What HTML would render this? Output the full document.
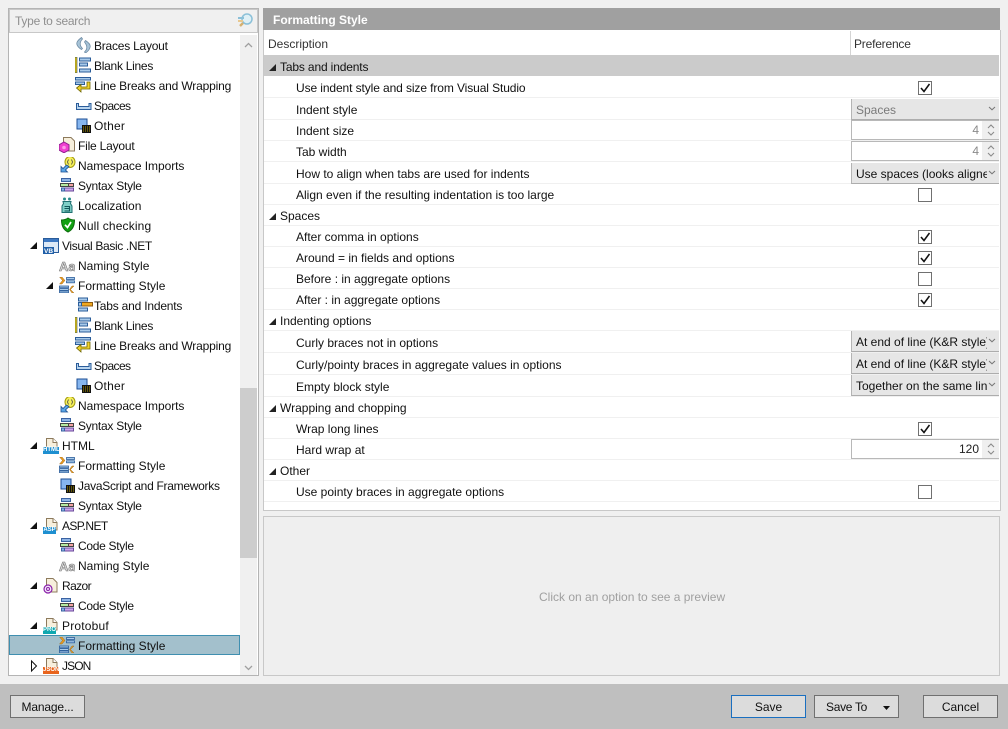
<!DOCTYPE html>
<html><head><meta charset="utf-8"><style>
html,body{margin:0;padding:0}
body{width:1008px;height:729px;position:relative;overflow:hidden;background:#f0f0f0;font:12px "Liberation Sans",sans-serif;color:#111}
div,svg{position:absolute}
.t{height:20px;line-height:20px;white-space:nowrap}
.i{width:16px;height:16px;overflow:visible}
.l{left:264px;width:735px;height:1px;background:#f0f0f0}
.cb{left:918px;width:12px;height:12px;border:1px solid #707070;background:#fff}
.cb svg{left:1px;top:1px}
.sel{left:851px;width:147px;background:#e6e6e6;border-left:1px solid #b4b4b4;border-bottom:1px solid #adadad;line-height:22px;white-space:nowrap;overflow:hidden;text-indent:4px}
.sel b{position:absolute;right:0;top:0;width:12px;height:20px;background:#e6e6e6}
.sel svg{right:3px;top:7px}
.sp{left:851px;width:147px;height:18px;background:#fff;border:1px solid #b8b8b8;border-width:1px 0 1px 1px;text-align:right;line-height:19px}
.sp span{position:absolute;right:20px;top:0}
.sp b{position:absolute;right:0;top:0;width:17px;height:18px;background:#efefef}
.sp svg{right:3px;top:2px}
.btn{height:21px;line-height:23px;text-align:center;background:#dcdcdc;border:1px solid #707070}
</style></head><body>
<svg width="0" height="0" style="left:0;top:0"><defs>
<symbol id="brace" viewBox="0 0 16 16"><path d="M5.500 .5C2 3 .5 5 .8 7C1.200 9 3 11 5.500 12.500L6.500 11.500C5 10 4.200 8.500 4.200 6.800C4.200 5 5 3.500 6.500 2Z" fill="#a8c4d8" stroke="#6f8ca4" stroke-width=".8"/><path d="M9.500 3.500C12.500 5.500 14.500 7.500 14.200 9.500C14 11.500 12.500 14 9.500 16L8.500 15C10 13.500 10.800 12 10.800 10.200C10.800 8.500 10 7 8.500 5Z" fill="#a8c4d8" stroke="#6f8ca4" stroke-width=".8"/></symbol>
<symbol id="blank" viewBox="0 0 16 16"><rect x="0" y="0" width="2" height="16" fill="#f4d000" stroke="#1d3f6e" stroke-width=".6"/><rect x="4.500" y="1" width="11" height="3" fill="#a9cbea" stroke="#2a5c9a"/><rect x="4.500" y="6" width="8" height="3" fill="#a9cbea" stroke="#2a5c9a"/><rect x="4.500" y="12" width="11" height="3" fill="#a9cbea" stroke="#2a5c9a"/></symbol>
<symbol id="wrap" viewBox="0 0 16 16"><rect x=".5" y=".5" width="15" height="2.500" fill="#a9cbea" stroke="#2a5c9a"/><rect x=".5" y="5" width="9" height="2.500" fill="#a9cbea" stroke="#2a5c9a"/><path d="M12 5H15V12H6V15L1.500 11L6 7.500V10H12Z" fill="#f2d32a" stroke="#6c6400" stroke-width=".8"/></symbol>
<symbol id="spaces" viewBox="0 0 16 16"><path d="M.5 6.500H2.500V9.500H13V6.500H15V12.500H.5Z" fill="#b8d4ee" stroke="#2a5c9a"/></symbol>
<symbol id="other" viewBox="0 0 16 16"><rect x="1" y="1" width="10" height="10" fill="#86b6ef" stroke="#1e4f94"/><rect x="6" y="7" width="9" height="8" fill="#111"/><path d="M7 9h7M7 11h7M7 13h7" stroke="#f0d000" stroke-width=".7" stroke-dasharray="1 1"/></symbol>
<symbol id="file" viewBox="0 0 16 16"><path d="M4.500 .5H12L15.500 4V14H8V9H4.500Z" fill="#f7efdc" stroke="#8d7a5c"/><path d="M5 5L10 7.800V13L5 15.800L0 13V7.800Z" fill="#f040d0" stroke="#902090"/><circle cx="5" cy="10.500" r="1.800" fill="#ff9ae8"/></symbol>
<symbol id="ns" viewBox="0 0 16 16"><ellipse cx="10" cy="5" rx="5" ry="5.500" fill="#f6f05a" stroke="#a39a10"/><path d="M8.500 2.500L7.500 5L8.500 7.500M11.500 2.500L12.500 5L11.500 7.500" fill="none" stroke="#444" stroke-width=".8"/><path d="M9 7L5.500 10.500L7.500 12.500H1V7L3 9L6.500 5.500Z" fill="#5aa6e6" stroke="#1d4f90" stroke-width=".8" transform="translate(0 2.500)"/></symbol>
<symbol id="syntax" viewBox="0 0 16 16"><rect x="1.500" y="1.500" width="9" height="3" fill="#8fb4e4" stroke="#3a62a2"/><rect x=".5" y="6.500" width="8" height="3" fill="#b6eaa2" stroke="#444"/><rect x="8.500" y="6.500" width="5" height="3" fill="#f4a4a4" stroke="#444"/><rect x="4.500" y="11" width="9" height="3" fill="#cda8ee" stroke="#6a4a9a"/><rect x="1.500" y="11" width="3" height="3" fill="#8fb4e4" stroke="#3a62a2"/></symbol>
<symbol id="loc" viewBox="0 0 16 16"><circle cx="5.500" cy="2" r="1.500" fill="#2a8c8c"/><circle cx="10.500" cy="2" r="1.500" fill="#2a8c8c"/><path d="M4 4.500H12L11.500 6.500L13 9V15.500H3V9L4.500 6.500Z" fill="#7fcfc6" stroke="#1f6f70"/><path d="M5.500 9.500H10.500V14H5.500M5.500 11.500H10.500" fill="none" stroke="#12585a" stroke-width="1.100"/></symbol>
<symbol id="null" viewBox="0 0 16 16"><path d="M8 1C10 2.500 12.200 3 14.500 3C14.500 9 12.800 12.800 8 15C3.200 12.800 1.500 9 1.500 3C3.800 3 6 2.500 8 1Z" fill="#12a012" stroke="#0b6a0b"/><path d="M5 7.800L7.500 10.500L11 5" fill="none" stroke="#fff" stroke-width="1.700"/></symbol>
<symbol id="vb" viewBox="0 0 16 16"><rect x=".5" y=".5" width="15" height="14" fill="#dde9f6" stroke="#2a5c9a"/><rect x="1" y="1" width="14" height="3" fill="#3d78c2"/><rect x="0" y="9" width="11" height="7" fill="#1f5fa8"/><text x="5.500" y="15" font-size="6.500" font-weight="bold" fill="#fff" text-anchor="middle" font-family="Liberation Sans">VB</text></symbol>
<symbol id="aa" viewBox="0 0 16 16"><text x="0" y="13" font-size="13" font-family="Liberation Sans" font-weight="bold" fill="#d8d8d8" stroke="#777" stroke-width=".6">Aa</text></symbol>
<symbol id="fmt" viewBox="0 0 16 16"><path d="M.5 0H3L6 3.500L3 7H.5L3.500 3.500Z" fill="#e89a20" stroke="#8c5a10" stroke-width=".4"/><rect x="7.500" y=".5" width="8" height="2" fill="#a9cbea" stroke="#2a5c9a" stroke-width=".8"/><rect x="7.500" y="3.800" width="8" height="2" fill="#a9cbea" stroke="#2a5c9a" stroke-width=".8"/><rect x=".5" y="9" width="9" height="1.800" fill="#a9cbea" stroke="#2a5c9a" stroke-width=".8"/><rect x=".5" y="11.600" width="9" height="1.800" fill="#a9cbea" stroke="#2a5c9a" stroke-width=".8"/><rect x=".5" y="14" width="9" height="1.800" fill="#a9cbea" stroke="#2a5c9a" stroke-width=".8"/><path d="M15 9L11.500 12.500L15 16H13L10.500 12.500L13 9Z" fill="#e89a20" stroke="#8c5a10" stroke-width=".4"/></symbol>
<symbol id="tabs" viewBox="0 0 16 16"><rect x="1.500" y="1" width="9" height="3" fill="#a9cbea" stroke="#2a5c9a"/><rect x="4.500" y="5.500" width="11" height="3.500" fill="#f0a820" stroke="#8c5a10"/><rect x="1.500" y="5.500" width="3" height="3.500" fill="#a9cbea" stroke="#2a5c9a"/><rect x="1.500" y="11" width="9" height="3" fill="#a9cbea" stroke="#2a5c9a"/></symbol>
<symbol id="page" viewBox="0 0 16 16"><path d="M3.500 .5H10L14 4.500V12H3.500Z" fill="#f7efdc" stroke="#8d7a5c"/><path d="M10 .5V4.500H14" fill="#fff" stroke="#8d7a5c"/></symbol>
<symbol id="razor" viewBox="0 0 16 16"><path d="M3.500 .5H10L14 4.500V14H3.500Z" fill="#f7efdc" stroke="#8d7a5c"/><circle cx="5" cy="11" r="4" fill="#f3e6fa" stroke="#8a20a8" stroke-width="1.200"/><circle cx="5" cy="11" r="1.500" fill="none" stroke="#8a20a8"/></symbol>
<symbol id="chk" viewBox="0 0 10 10"><path d="M1 5L4 8.500L9.500 1" fill="none" stroke="#111" stroke-width="1.600"/></symbol>
<symbol id="dn" viewBox="0 0 8 5"><path d="M1 1L4 3.800L7 1" fill="none" stroke="#777" stroke-width="1"/></symbol>
<symbol id="spin" viewBox="0 0 10 14"><path d="M2 5L5 2L8 5M2 9L5 12L8 9" fill="none" stroke="#8a8a8a" stroke-width="1.100"/></symbol>
</defs></svg>

<!-- LEFT -->
<div style="left:8px;top:8px;width:249px;height:666px;border:1px solid #b4b4b4;background:#fff"></div>
<div style="left:9px;top:9px;width:249px;height:24px;background:#f0f0f0;border:1px solid #c8c8c8;box-sizing:border-box"></div>
<div class="t" style="left:15px;top:11px;color:#8f8f8f;letter-spacing:-.25px">Type to search</div>
<svg style="left:237px;top:13px" width="18" height="15" viewBox="0 0 18 15"><circle cx="10" cy="6" r="5" fill="#dff0f6" stroke="#8bc0d8" stroke-width="1.500"/><path d="M6 10L3 13" stroke="#d4b070" stroke-width="2.500"/><rect x="1" y="4" width="6" height="2" fill="#8bc0d8"/><rect x="1" y="7" width="5" height="2" fill="#e8c890"/></svg>
<div style="left:240px;top:35px;width:17px;height:640px;background:#f0f0f0"></div>
<div style="left:240px;top:388px;width:17px;height:170px;background:#cdcdcd"></div>
<svg style="left:244px;top:42px" width="9" height="6" viewBox="0 0 9 6"><path d="M1 5L4.500 1.500L8 5" fill="none" stroke="#a0a0a0" stroke-width="1.300"/></svg>
<svg style="left:244px;top:665px" width="9" height="6" viewBox="0 0 9 6"><path d="M1 1L4.500 4.500L8 1" fill="none" stroke="#a0a0a0" stroke-width="1.300"/></svg>
<div style="left:9px;top:635px;width:229px;height:18px;background:#a3c0cc;border:1px solid #3f8fb0"></div>

<svg class="i" style="left:76px;top:37px"><use href="#brace"/></svg><div class="t" style="left:94px;top:36px;letter-spacing:-.23px">Braces Layout</div>
<svg class="i" style="left:75px;top:57px"><use href="#blank"/></svg><div class="t" style="left:94px;top:56px;letter-spacing:-.27px">Blank Lines</div>
<svg class="i" style="left:75px;top:77px"><use href="#wrap"/></svg><div class="t" style="left:94px;top:76px;letter-spacing:-.17px">Line Breaks and Wrapping</div>
<svg class="i" style="left:76px;top:97px"><use href="#spaces"/></svg><div class="t" style="left:94px;top:96px;letter-spacing:-.6px">Spaces</div>
<svg class="i" style="left:76px;top:118px"><use href="#other"/></svg><div class="t" style="left:94px;top:116px;letter-spacing:.2px">Other</div>
<svg class="i" style="left:59px;top:137px"><use href="#file"/></svg><div class="t" style="left:78px;top:136px;letter-spacing:-.2px">File Layout</div>
<svg class="i" style="left:60px;top:157px"><use href="#ns"/></svg><div class="t" style="left:78px;top:156px;letter-spacing:-.06px">Namespace Imports</div>
<svg class="i" style="left:60px;top:177px"><use href="#syntax"/></svg><div class="t" style="left:78px;top:176px;letter-spacing:-.25px">Syntax Style</div>
<svg class="i" style="left:59px;top:197px"><use href="#loc"/></svg><div class="t" style="left:78px;top:196px">Localization</div>
<svg class="i" style="left:60px;top:217px"><use href="#null"/></svg><div class="t" style="left:78px;top:216px;letter-spacing:.15px">Null checking</div>
<svg class="i" style="left:43px;top:238px"><use href="#vb"/></svg><div class="t" style="left:62px;top:236px;letter-spacing:-.35px">Visual Basic .NET</div>
<svg class="i" style="left:59px;top:258px"><use href="#aa"/></svg><div class="t" style="left:78px;top:256px">Naming Style</div>
<svg class="i" style="left:59px;top:277px"><use href="#fmt"/></svg><div class="t" style="left:78px;top:276px">Formatting Style</div>
<svg class="i" style="left:77px;top:297px"><use href="#tabs"/></svg><div class="t" style="left:94px;top:296px;letter-spacing:-.2px">Tabs and Indents</div>
<svg class="i" style="left:75px;top:317px"><use href="#blank"/></svg><div class="t" style="left:94px;top:316px;letter-spacing:-.27px">Blank Lines</div>
<svg class="i" style="left:75px;top:337px"><use href="#wrap"/></svg><div class="t" style="left:94px;top:336px;letter-spacing:-.17px">Line Breaks and Wrapping</div>
<svg class="i" style="left:76px;top:357px"><use href="#spaces"/></svg><div class="t" style="left:94px;top:356px;letter-spacing:-.6px">Spaces</div>
<svg class="i" style="left:76px;top:378px"><use href="#other"/></svg><div class="t" style="left:94px;top:376px;letter-spacing:.2px">Other</div>
<svg class="i" style="left:60px;top:397px"><use href="#ns"/></svg><div class="t" style="left:78px;top:396px;letter-spacing:-.06px">Namespace Imports</div>
<svg class="i" style="left:60px;top:417px"><use href="#syntax"/></svg><div class="t" style="left:78px;top:416px;letter-spacing:-.25px">Syntax Style</div>
<svg class="i" style="left:43px;top:438px"><use href="#page"/></svg><div style="left:43px;top:447px;width:16px;height:7px;background:#1e8fd0;color:#fff;font:bold 6px/7px 'Liberation Sans';text-align:center">HTML</div><div class="t" style="left:62px;top:436px">HTML</div>
<svg class="i" style="left:59px;top:457px"><use href="#fmt"/></svg><div class="t" style="left:78px;top:456px">Formatting Style</div>
<svg class="i" style="left:60px;top:478px"><use href="#other"/></svg><div class="t" style="left:78px;top:476px;letter-spacing:-.28px">JavaScript and Frameworks</div>
<svg class="i" style="left:60px;top:497px"><use href="#syntax"/></svg><div class="t" style="left:78px;top:496px;letter-spacing:-.25px">Syntax Style</div>
<svg class="i" style="left:43px;top:518px"><use href="#page"/></svg><div style="left:43px;top:527px;width:13px;height:7px;background:#1e8fd0;color:#fff;font:bold 6px/7px 'Liberation Sans';text-align:center">ASP</div><div class="t" style="left:62px;top:516px;letter-spacing:-.6px">ASP.NET</div>
<svg class="i" style="left:60px;top:537px"><use href="#syntax"/></svg><div class="t" style="left:78px;top:536px;letter-spacing:-.3px">Code Style</div>
<svg class="i" style="left:59px;top:558px"><use href="#aa"/></svg><div class="t" style="left:78px;top:556px">Naming Style</div>
<svg class="i" style="left:43px;top:578px"><use href="#razor"/></svg><div class="t" style="left:62px;top:576px;letter-spacing:-.6px">Razor</div>
<svg class="i" style="left:60px;top:597px"><use href="#syntax"/></svg><div class="t" style="left:78px;top:596px;letter-spacing:-.3px">Code Style</div>
<svg class="i" style="left:43px;top:618px"><use href="#page"/></svg><div style="left:43px;top:627px;width:13px;height:7px;background:#10a8b0;color:#fff;font:bold 6px/7px 'Liberation Sans';text-align:center">PRO</div><div class="t" style="left:62px;top:616px;letter-spacing:.2px">Protobuf</div>
<svg class="i" style="left:59px;top:637px"><use href="#fmt"/></svg><div class="t" style="left:78px;top:636px">Formatting Style</div>
<svg class="i" style="left:43px;top:658px"><use href="#page"/></svg><div style="left:43px;top:667px;width:16px;height:7px;background:#e8641c;color:#fff;font:bold 6px/7px 'Liberation Sans';text-align:center">JSON</div><div class="t" style="left:62px;top:656px;letter-spacing:-.9px">JSON</div>

<svg style="left:0;top:0" width="260" height="729"><g fill="#111">
<path d="M37 242V249H30Z"/><path d="M53 282V289H46Z"/><path d="M37 442V449H30Z"/><path d="M37 522V529H30Z"/><path d="M37 582V589H30Z"/><path d="M37 622V629H30Z"/></g>
<path d="M31.500 661V671L36.500 666Z" fill="#fff" stroke="#111"/></svg>

<!-- RIGHT -->
<div style="left:263px;top:8px;width:737px;height:22px;background:#a0a0a0"></div>
<div class="t" style="left:273px;top:10px;color:#fff;font-weight:bold">Formatting Style</div>
<div style="left:263px;top:30px;width:736px;height:480px;background:#fff;border:1px solid #c8c8c8;border-top:0"></div>
<div class="t" style="left:268px;top:34px;color:#333">Description</div>
<div class="t" style="left:854px;top:34px;color:#333;letter-spacing:-.2px">Preference</div>
<div style="left:850px;top:31px;width:1px;height:24px;background:#d4d4d4"></div>
<div style="left:264px;top:55px;width:735px;height:21px;background:#cbcbcb"></div>

<div class="l" style="top:97px"></div><div class="l" style="top:119px"></div><div class="l" style="top:140px"></div><div class="l" style="top:161px"></div><div class="l" style="top:183px"></div><div class="l" style="top:204px"></div><div class="l" style="top:225px"></div><div class="l" style="top:246px"></div><div class="l" style="top:267px"></div><div class="l" style="top:288px"></div><div class="l" style="top:309px"></div><div class="l" style="top:330px"></div><div class="l" style="top:352px"></div><div class="l" style="top:374px"></div><div class="l" style="top:396px"></div><div class="l" style="top:417px"></div><div class="l" style="top:438px"></div><div class="l" style="top:459px"></div><div class="l" style="top:480px"></div><div class="l" style="top:501px"></div>

<svg style="left:0;top:0" width="280" height="520"><g fill="#222"><path d="M276 64V71H269Z"/><path d="M276 213V220H269Z"/><path d="M276 318V325H269Z"/><path d="M276 405V412H269Z"/><path d="M276 468V475H269Z"/></g></svg>
<div class="t" style="left:280px;top:57px;letter-spacing:-.15px">Tabs and indents</div>
<div class="t" style="left:296px;top:78px;letter-spacing:-.1px">Use indent style and size from Visual Studio</div>
<div class="t" style="left:296px;top:100px">Indent style</div>
<div class="t" style="left:296px;top:121px">Indent size</div>
<div class="t" style="left:296px;top:142px">Tab width</div>
<div class="t" style="left:296px;top:164px">How to align when tabs are used for indents</div>
<div class="t" style="left:296px;top:185px">Align even if the resulting indentation is too large</div>
<div class="t" style="left:280px;top:206px">Spaces</div>
<div class="t" style="left:296px;top:227px">After comma in options</div>
<div class="t" style="left:296px;top:248px">Around = in fields and options</div>
<div class="t" style="left:296px;top:269px">Before : in aggregate options</div>
<div class="t" style="left:296px;top:290px">After : in aggregate options</div>
<div class="t" style="left:280px;top:311px">Indenting options</div>
<div class="t" style="left:296px;top:333px">Curly braces not in options</div>
<div class="t" style="left:296px;top:355px">Curly/pointy braces in aggregate values in options</div>
<div class="t" style="left:296px;top:377px">Empty block style</div>
<div class="t" style="left:280px;top:398px">Wrapping and chopping</div>
<div class="t" style="left:296px;top:419px">Wrap long lines</div>
<div class="t" style="left:296px;top:440px">Hard wrap at</div>
<div class="t" style="left:280px;top:461px">Other</div>
<div class="t" style="left:296px;top:482px">Use pointy braces in aggregate options</div>

<div class="cb" style="top:81px"><svg width="10" height="10"><use href="#chk"/></svg></div>
<div class="sel" style="top:99px;height:20px;color:#7a7a7a">Spaces<b><svg width="8" height="5"><use href="#dn"/></svg></b></div>
<div class="sp" style="top:120px;color:#8a8a8a"><span>4</span><b><svg width="10" height="14"><use href="#spin"/></svg></b></div>
<div class="sp" style="top:141px;color:#8a8a8a"><span>4</span><b><svg width="10" height="14"><use href="#spin"/></svg></b></div>
<div class="sel" style="top:163px;height:20px">Use spaces (looks aligned)<b><svg width="8" height="5"><use href="#dn"/></svg></b></div>
<div class="cb" style="top:188px"></div>
<div class="cb" style="top:230px"><svg width="10" height="10"><use href="#chk"/></svg></div>
<div class="cb" style="top:251px"><svg width="10" height="10"><use href="#chk"/></svg></div>
<div class="cb" style="top:272px"></div>
<div class="cb" style="top:293px"><svg width="10" height="10"><use href="#chk"/></svg></div>
<div class="sel" style="top:331px;height:20px">At end of line (K&amp;R style)<b><svg width="8" height="5"><use href="#dn"/></svg></b></div>
<div class="sel" style="top:353px;height:20px">At end of line (K&amp;R style)<b><svg width="8" height="5"><use href="#dn"/></svg></b></div>
<div class="sel" style="top:375px;height:20px">Together on the same line<b><svg width="8" height="5"><use href="#dn"/></svg></b></div>
<div class="cb" style="top:422px"><svg width="10" height="10"><use href="#chk"/></svg></div>
<div class="sp" style="top:439px;color:#222"><span>120</span><b><svg width="10" height="14"><use href="#spin"/></svg></b></div>
<div class="cb" style="top:485px"></div>

<div style="left:263px;top:516px;width:735px;height:158px;background:#efefef;border:1px solid #c8c8c8"></div>
<div class="t" style="left:539px;top:587px;color:#a0a0a0">Click on an option to see a preview</div>

<!-- FOOTER -->
<div style="left:0;top:684px;width:1008px;height:45px;background:#bfbfbf"></div>
<div class="btn" style="left:10px;top:695px;width:73px;letter-spacing:-.15px">Manage...</div>
<div class="btn" style="left:731px;top:695px;width:73px;border-color:#1a6fc0">Save</div>
<div class="btn" style="left:814px;top:695px;width:83px;text-align:left;text-indent:11px;letter-spacing:-.3px">Save To</div>
<svg style="left:883px;top:706px" width="8" height="5"><path d="M0 0H7L3.500 4Z" fill="#111"/></svg>
<div class="btn" style="left:923px;top:695px;width:73px">Cancel</div>
</body></html>
